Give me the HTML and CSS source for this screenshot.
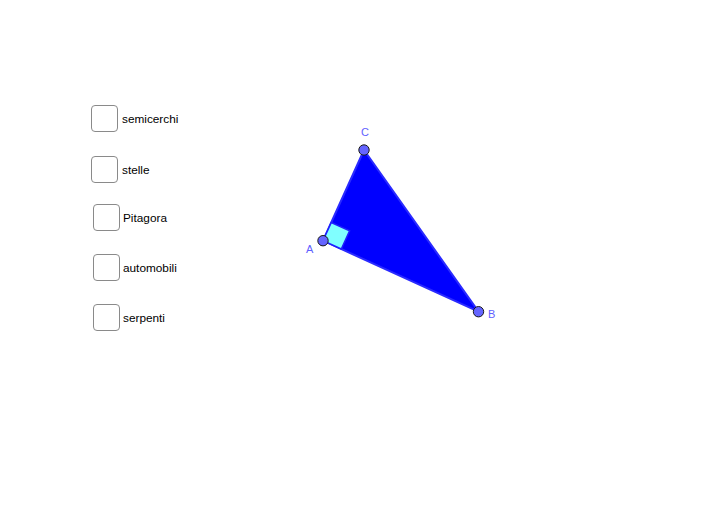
FILE: index.html
```html
<!DOCTYPE html>
<html>
<head>
<meta charset="utf-8">
<link rel="stylesheet" href="styles.css">
</head>
<body>
<div class="applet">
  <div class="checks">
    <label class="row r1"><span class="box"></span><span class="txt">semicerchi</span></label>
    <label class="row r2"><span class="box"></span><span class="txt">stelle</span></label>
    <label class="row r3"><span class="box"></span><span class="txt">Pitagora</span></label>
    <label class="row r4"><span class="box"></span><span class="txt">automobili</span></label>
    <label class="row r5"><span class="box"></span><span class="txt">serpenti</span></label>
  </div>
  <svg class="drawing" width="713" height="515" viewBox="0 0 713 515">
    <polygon points="323,240.7 364,150 478.5,311.7" fill="#0000ff" stroke="#2a2aff" stroke-width="2" stroke-linejoin="round"/>
    <polygon points="323,240.7 331.3,222.5 349.6,230.8 341.3,249" fill="#80ffff" stroke="#1f1fff" stroke-width="1.5"/>
    <circle cx="323" cy="240.7" r="5.2" fill="#6464ff" stroke="#1a1a1a" stroke-width="1"/>
    <circle cx="364" cy="150" r="5.2" fill="#6464ff" stroke="#1a1a1a" stroke-width="1"/>
    <circle cx="478.5" cy="311.7" r="5.2" fill="#6464ff" stroke="#1a1a1a" stroke-width="1"/>
    <text x="361" y="136" class="lbl">C</text>
    <text x="306" y="253" class="lbl">A</text>
    <text x="488" y="318" class="lbl">B</text>
  </svg>
</div>
</body>
</html>
```
FILE: styles.css
```css
html, body {
  margin: 0;
  padding: 0;
  background: #ffffff;
}
.applet {
  position: relative;
  width: 713px;
  height: 515px;
  overflow: hidden;
  font-family: "Liberation Sans", Arial, sans-serif;
}
.drawing {
  position: absolute;
  left: 0;
  top: 0;
}
.checks {
  position: absolute;
  left: 0;
  top: 0;
  z-index: 1;
  display: flex;
  flex-direction: column;
  padding-top: 105px;
}
.row {
  display: flex;
  align-items: center;
  height: 27px;
  gap: 3px;
  font-size: 11.8px;
  color: #000;
}
.r1, .r2 { margin-left: 91px; gap: 4px; }
.r3, .r4, .r5 { margin-left: 93px; }
.r2 { margin-top: 24px; }
.r3 { margin-top: 21px; }
.r4 { margin-top: 23px; }
.r5 { margin-top: 23px; }
.box {
  box-sizing: border-box;
  width: 27px;
  height: 27px;
  border: 1.5px solid #8a8a8a;
  border-radius: 4px;
  background: #fff;
}
.lbl {
  font-family: "Liberation Sans", Arial, sans-serif;
  font-size: 11px;
  fill: #6060ff;
}
```
